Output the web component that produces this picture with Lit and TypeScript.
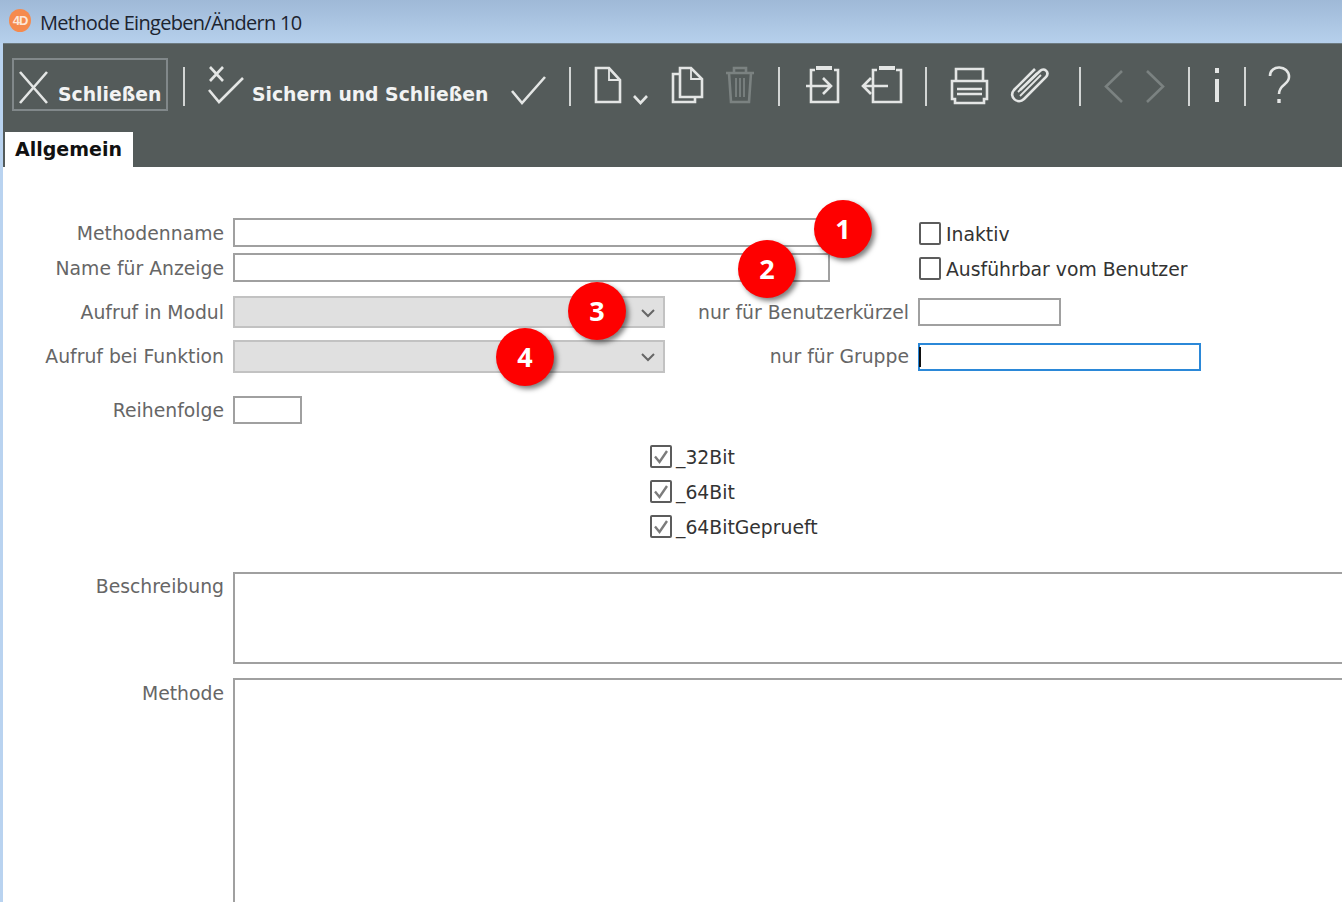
import { LitElement, html, css, svg } from 'lit';
import { customElement } from 'lit/decorators.js';

// Red numbered markers lying over the form (page coordinates of the centre)
const MARKERS = [
  { n: 1, x: 843, y: 229 },
  { n: 2, x: 767, y: 269 },
  { n: 3, x: 597, y: 311 },
  { n: 4, x: 525, y: 357 },
];

const CHECKS = ['_32Bit', '_64Bit', '_64BitGeprueft'];

@customElement('app-root')
export class AppRoot extends LitElement {
  static styles = css`
    :host {
      display: block;
      position: relative;
      width: 1342px;
      height: 902px;
      overflow: hidden;
      background: #fff;
      font-family: 'DejaVu Sans', Verdana, sans-serif;
    }
    .titlebar {
      display: flex;
      align-items: center;
      height: 43px;
      box-sizing: border-box;
      padding: 0 0 2px 9px;
      background: linear-gradient(#9fb9d7, #b6d0ec);
    }
    .logo {
      display: flex;
      align-items: center;
      justify-content: center;
      width: 22px;
      height: 23px;
      border-radius: 50%;
      background: #f58a4d;
      color: #fde6d8;
      font: 700 13px 'Liberation Sans', sans-serif;
      letter-spacing: -1px;
    }
    .title {
      margin-left: 9px;
      padding-top: 3px;
      font: 400 20px 'Open Sans', sans-serif;
      letter-spacing: -0.7px;
      color: #1c2430;
    }
    .window {
      border-left: 3px solid #b9d3f0;
      height: 859px;
    }
    .toolbar {
      display: flex;
      flex-direction: column;
      justify-content: space-between;
      height: 124px;
      box-sizing: border-box;
      padding-top: 14px;
      background: #545b5a;
      border-top: 1px solid #6d7a80;
    }
    .tools {
      display: flex;
      align-items: flex-start;
      padding-left: 9px;
      height: 56px;
    }
    .tools svg {
      display: block;
      flex: none;
      fill: none;
      stroke: #e4e6e5;
      stroke-width: 2.6;
    }
    .tools svg .dim {
      stroke: #7b8281;
    }
    .tools svg .thin {
      stroke-width: 1.8;
    }
    .close {
      display: flex;
      width: 156px;
      height: 53px;
      box-sizing: border-box;
      border: 2px solid #81888a;
    }
    .tool-text {
      flex: none;
      margin-top: 25px;
      font-size: 18.8px;
      font-weight: 700;
      line-height: 24px;
      color: #f2f3f3;
      white-space: nowrap;
    }
    .close .tool-text {
      margin-top: 23px;
      width: 103px;
    }
    .save-text {
      width: 238px;
    }
    .sep {
      flex: none;
      width: 2px;
      height: 39px;
      margin: 9px 15px 0;
      background: #d2d5d4;
    }
    .tab {
      width: 128px;
      height: 35px;
      box-sizing: border-box;
      margin-left: 2px;
      padding-left: 10px;
      background: #fff;
      font-size: 19px;
      font-weight: 700;
      line-height: 34px;
      color: #111;
    }
    .form {
      padding-top: 51px;
      color: #666;
      font-size: 18.8px;
    }
    .row {
      display: flex;
      align-items: center;
    }
    .r1 { height: 29px; }
    .r2 { height: 29px; margin-top: 6px; }
    .r3 { height: 32px; margin-top: 14px; }
    .r4 { height: 33px; margin-top: 12px; }
    .r5 { height: 28px; margin-top: 23px; }
    .r1 .label, .r2 .label { padding-top: 2px; }
    .label {
      flex: none;
      width: 221px;
      margin-right: 9px;
      text-align: right;
      white-space: nowrap;
    }
    .side-label {
      flex: none;
      width: 244px;
      margin-right: 9px;
      text-align: right;
      white-space: nowrap;
    }
    .field {
      flex: none;
      box-sizing: border-box;
      height: 100%;
      border: 2px solid #a0a0a0;
      background: #fff;
    }
    .name { width: 590px; }
    .display { width: 597px; }
    .select {
      display: flex;
      align-items: center;
      justify-content: flex-end;
      width: 432px;
      padding: 2px 8px 0 0;
      border-color: #c2c2c2;
      background: #e0e0e0;
    }
    .select svg {
      fill: none;
      stroke: #666;
      stroke-width: 2;
    }
    .short {
      width: 143px;
      height: 28px;
    }
    .group {
      position: relative;
      width: 283px;
      height: 28px;
      border-color: #2b88d8;
    }
    .group::before {
      content: '';
      position: absolute;
      left: -1px;
      top: 2px;
      bottom: 2px;
      width: 2px;
      background: #111;
    }
    .order { width: 69px; }
    .flag {
      display: flex;
      align-items: center;
      gap: 5px;
      color: #333;
      white-space: nowrap;
    }
    .flag-text { padding-top: 2px; }
    .inactive { margin-left: 96px; margin-top: 2px; }
    .user { margin-left: 89px; margin-top: 2px; }
    .box {
      flex: none;
      width: 22px;
      height: 23px;
      box-sizing: border-box;
      border: 2px solid #5c5c5c;
      border-radius: 2px;
    }
    .box svg {
      display: block;
      fill: none;
      stroke: #7c7c7c;
      stroke-width: 2.4;
    }
    .checks {
      display: flex;
      flex-direction: column;
      gap: 12px;
      margin: 21px 0 0 647px;
    }
    .checks .flag { height: 23px; gap: 4px; }
    .desc { height: 92px; margin-top: 34px; align-items: stretch; }
    .code { height: 240px; margin-top: 14px; align-items: stretch; }
    .desc .label { padding-top: 3px; line-height: 24px; }
    .code .label { padding-top: 4px; line-height: 24px; }
    .wide { width: 1200px; }
    .marker {
      position: absolute;
      display: flex;
      align-items: center;
      justify-content: center;
      width: 58px;
      height: 56px;
      padding-bottom: 2px;
      border-radius: 50%;
      background: #fe0000;
      box-shadow: 3px 3px 5px rgba(0, 0, 0, 0.5);
      color: #fff;
      font: 700 27px 'Open Sans', sans-serif;
    }
  `;

  // Icons are drawn in page coordinates: the viewBox is the slot's place on the page
  private slot(x: number, w: number, content: unknown, y = 57, h = 56) {
    return html`<svg width=${w} height=${h} viewBox="${x} ${y} ${w} ${h}">${content}</svg>`;
  }

  private toolbar() {
    return html`
      <div class="tools">
        <div class="close">
          ${this.slot(14, 44, svg`<path d="M20 71L47 102M47 71L20 102"/>`, 59, 49)}
          <span class="tool-text">Schließen</span>
        </div>
        <span class="sep"></span>
        ${this.slot(200, 52, svg`
          <path d="M210 66L223 80M223 66L210 80"/>
          <path d="M209 89L219 101L243 77"/>`)}
        <span class="tool-text save-text">Sichern und Schließen</span>
        ${this.slot(490, 64, svg`<path d="M512 90L522 102L545 76"/>`)}
        <span class="sep"></span>
        ${this.slot(586, 74, svg`
          <path d="M596 67H609L620 79V101H596Z"/>
          <path class="thin" d="M609 67V79H620"/>
          <path d="M634 95L640.5 102L647 95"/>`)}
        ${this.slot(660, 54, svg`
          <path d="M680 67H691L702 78V96H680Z"/>
          <path class="thin" d="M691 67V78H702"/>
          <path d="M680 73H673V101H695V96"/>`)}
        ${this.slot(714, 49, svg`
          <g class="dim">
            <path class="dim" d="M726 72H754M734 72V67H746V72"/>
            <path class="dim" d="M729 72L731 101H749L751 72"/>
            <path class="dim thin" d="M736 77V96M740 77V96M744 77V96"/>
          </g>`)}
        <span class="sep"></span>
        ${this.slot(795, 57, svg`
          <path d="M815 69H811V101H838V69H834"/>
          <path d="M816 67H832" stroke-width="4"/>
          <path d="M806 85H831M823 77L831 85L823 93"/>`)}
        ${this.slot(852, 58, svg`
          <path d="M877 69H873V101H901V69H896"/>
          <path d="M879 67H895" stroke-width="4"/>
          <path d="M863 85H888M871 77L863 85L871 93"/>`)}
        <span class="sep"></span>
        ${this.slot(942, 58, svg`
          <path d="M956 80V68H983V80"/>
          <path d="M956 80H952V98H955V102H984V98H987V80Z"/>
          <path d="M957 88H982M957 93H982"/>`)}
        ${this.slot(1000, 64, svg`
          <path d="M1020 89L1040 70C1044 66 1050 71 1046 76L1024 98C1018 104 1008 96 1014 89L1035 68"/>
          <path class="thin" d="M1020 95L1041 74M1018 91L1037 72"/>`)}
        <span class="sep"></span>
        ${this.slot(1096, 39, svg`<path class="dim" d="M1122 70L1106 85.5L1122 101"/>`)}
        ${this.slot(1135, 38, svg`<path class="dim" d="M1147 70L1163 85.5L1147 101"/>`)}
        <span class="sep"></span>
        ${this.slot(1205, 24, svg`
          <path d="M1217 78V101" stroke-width="4"/>
          <path d="M1217 67V72" stroke-width="4"/>`)}
        <span class="sep"></span>
        ${this.slot(1261, 39, svg`
          <path d="M1270 75C1270 63 1289 64 1289 76C1289 84 1279 83 1279 93"/>
          <path d="M1279 98V102" stroke-width="3.4"/>`)}
      </div>
    `;
  }

  private select() {
    return html`<div class="field select">
      <svg width="14" height="9" viewBox="0 0 14 9"><path d="M1 1L7 7L13 1"/></svg>
    </div>`;
  }

  render() {
    return html`
      <div class="titlebar">
        <span class="logo">4D</span>
        <span class="title">Methode Eingeben/Ändern 10</span>
      </div>
      <div class="window">
        <div class="toolbar">
          ${this.toolbar()}
          <div class="tab">Allgemein</div>
        </div>
        <div class="form">
          <div class="row r1">
            <span class="label">Methodenname</span>
            <div class="field name"></div>
            <label class="flag inactive"><span class="box"></span><span class="flag-text">Inaktiv</span></label>
          </div>
          <div class="row r2">
            <span class="label">Name für Anzeige</span>
            <div class="field display"></div>
            <label class="flag user"><span class="box"></span><span class="flag-text">Ausführbar vom Benutzer</span></label>
          </div>
          <div class="row r3">
            <span class="label">Aufruf in Modul</span>
            ${this.select()}
            <span class="side-label">nur für Benutzerkürzel</span>
            <div class="field short"></div>
          </div>
          <div class="row r4">
            <span class="label">Aufruf bei Funktion</span>
            ${this.select()}
            <span class="side-label">nur für Gruppe</span>
            <div class="field group"></div>
          </div>
          <div class="row r5">
            <span class="label">Reihenfolge</span>
            <div class="field order"></div>
          </div>
          <div class="checks">
            ${CHECKS.map(
              (c) => html`<label class="flag">
                <span class="box">
                  <svg width="18" height="19" viewBox="0 0 18 19"><path d="M3 9.5L7.5 15L15 4"/></svg>
                </span><span class="flag-text">${c}</span>
              </label>`
            )}
          </div>
          <div class="row desc">
            <span class="label">Beschreibung</span>
            <div class="field wide"></div>
          </div>
          <div class="row code">
            <span class="label">Methode</span>
            <div class="field wide"></div>
          </div>
        </div>
      </div>
      ${MARKERS.map(
        (m) => html`<div class="marker" style="left:${m.x - 29}px;top:${m.y - 29}px">${m.n}</div>`
      )}
    `;
  }
}
